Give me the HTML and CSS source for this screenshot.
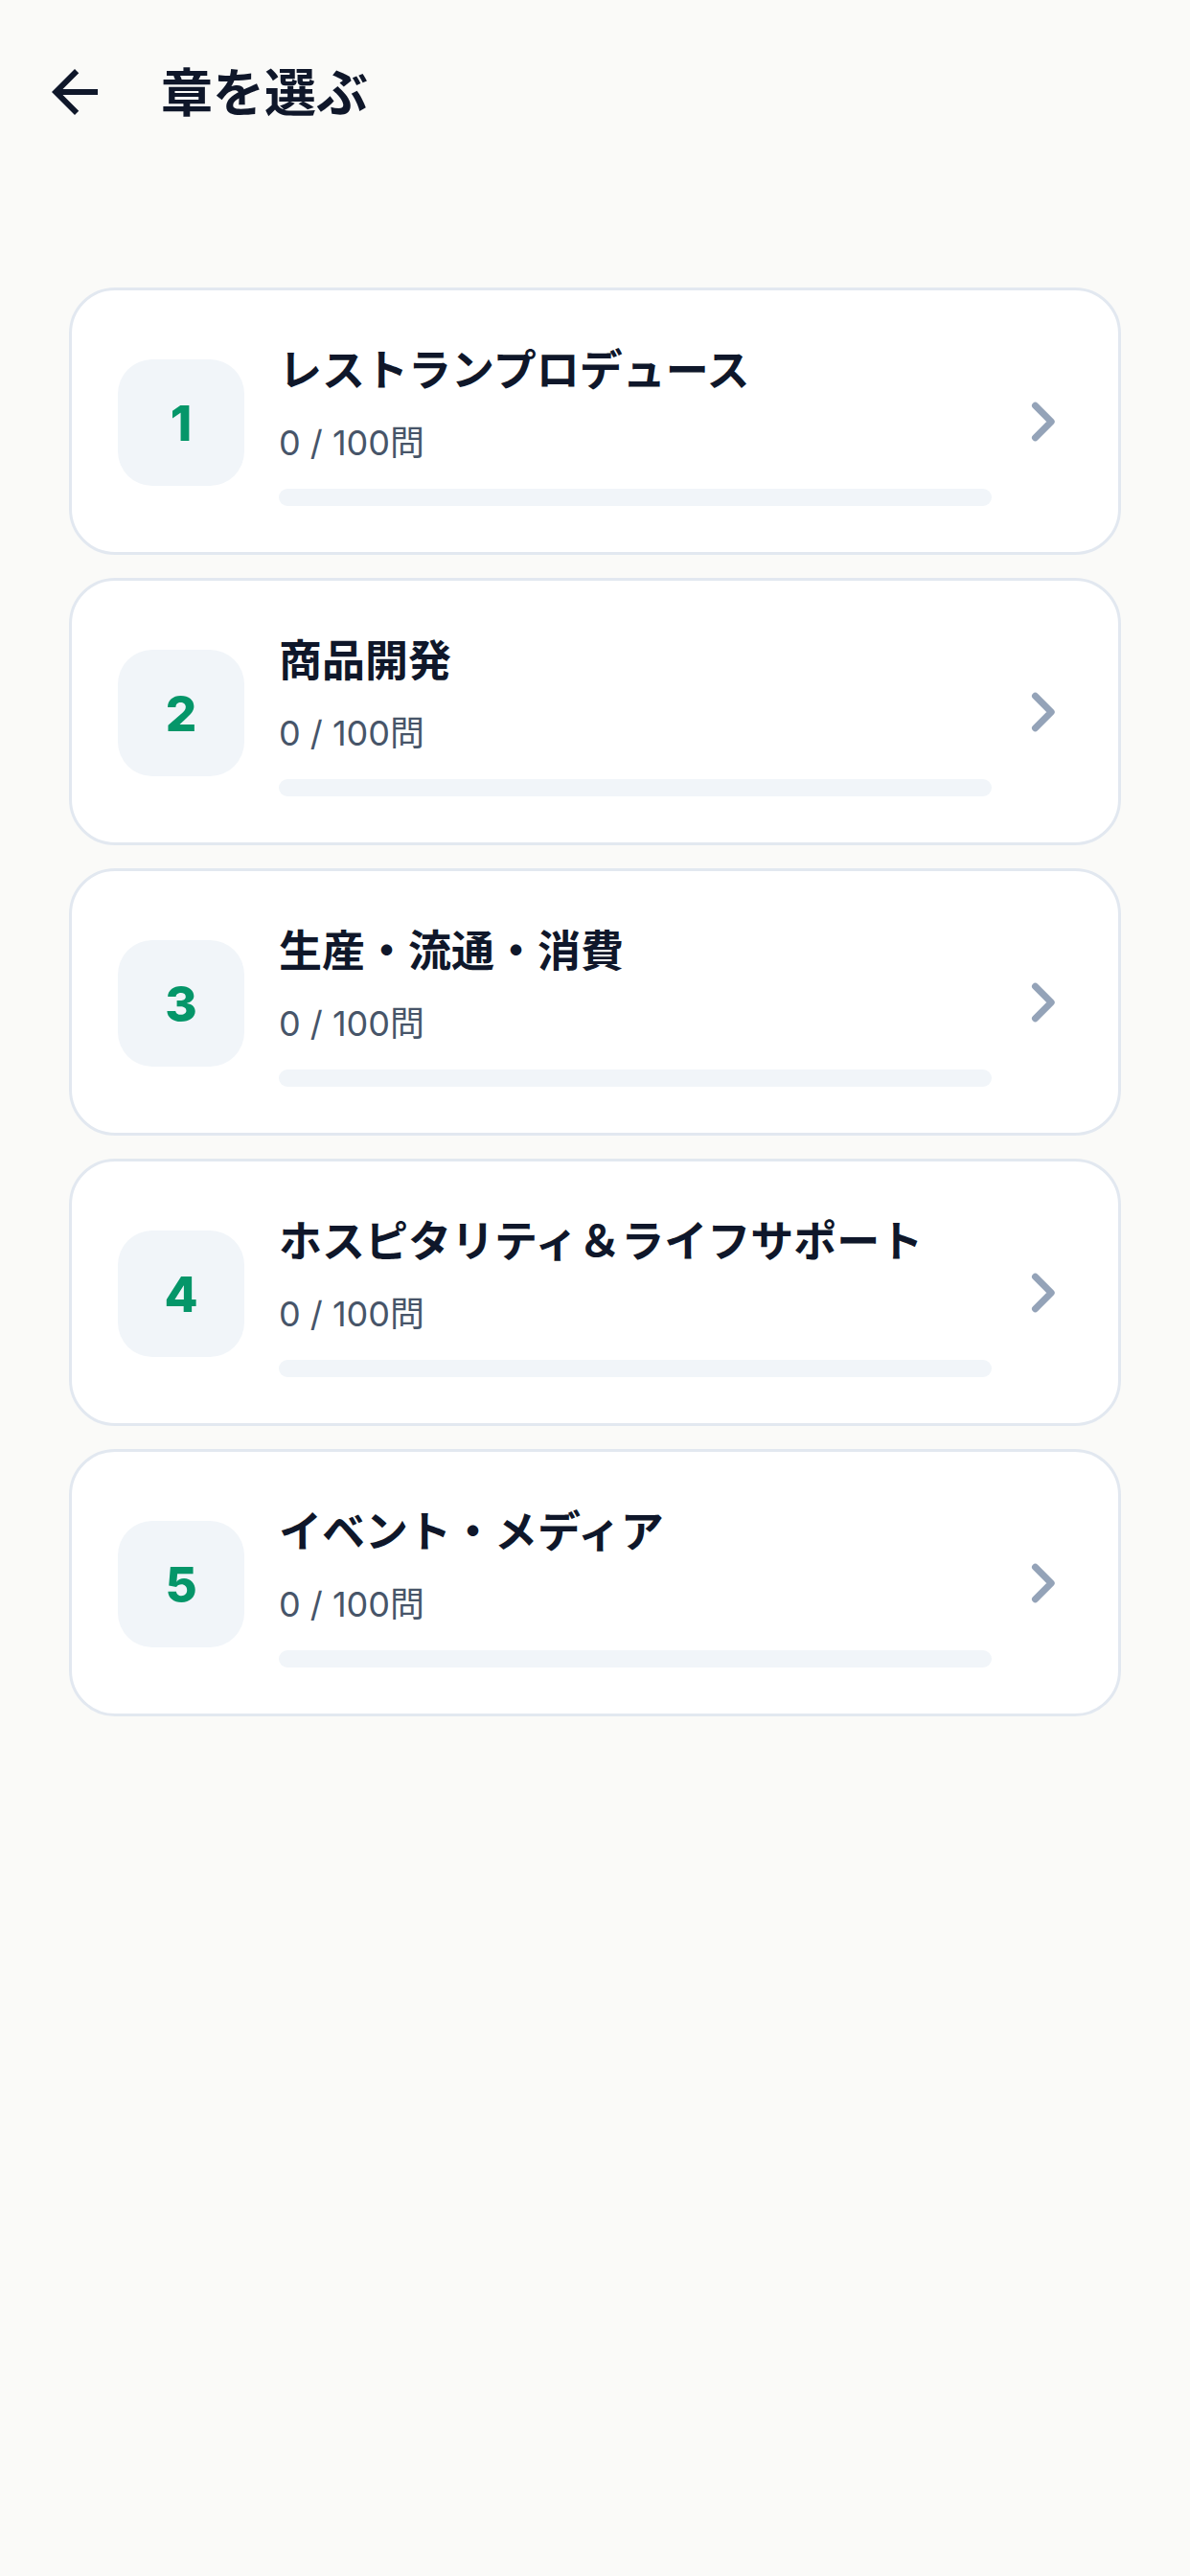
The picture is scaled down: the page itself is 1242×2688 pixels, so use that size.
FILE: index.html
```html
<!DOCTYPE html>
<html lang="ja">
<head>
<meta charset="utf-8">
<meta name="viewport" content="width=device-width, initial-scale=1">
<title>章を選ぶ</title>
<link rel="stylesheet" href="styles.css">
</head>
<body>
<header class="app-bar">
  <button class="back" type="button" aria-label="戻る">
    <svg viewBox="0 0 24 24" width="72" height="72" aria-hidden="true"><path fill="currentColor" d="M20 11H7.83l5.59-5.59L12 4l-8 8 8 8 1.41-1.41L7.83 13H20v-2z"/></svg>
  </button>
  <h1 class="title">章を選ぶ</h1>
</header>
<main class="chapters">
  <a class="card" href="#chapter-1">
    <span class="number">1</span>
    <span class="info"><span class="name">レストランプロデュース</span><span class="count">0 / 100問</span><span class="track"></span></span>
    <svg class="chevron" viewBox="0 0 66 66" aria-hidden="true"><path d="M27.5 16.2L44.2 33 27.5 49.8"/></svg>
  </a>
  <a class="card" href="#chapter-2">
    <span class="number">2</span>
    <span class="info"><span class="name">商品開発</span><span class="count">0 / 100問</span><span class="track"></span></span>
    <svg class="chevron" viewBox="0 0 66 66" aria-hidden="true"><path d="M27.5 16.2L44.2 33 27.5 49.8"/></svg>
  </a>
  <a class="card" href="#chapter-3">
    <span class="number">3</span>
    <span class="info"><span class="name">生産・流通・消費</span><span class="count">0 / 100問</span><span class="track"></span></span>
    <svg class="chevron" viewBox="0 0 66 66" aria-hidden="true"><path d="M27.5 16.2L44.2 33 27.5 49.8"/></svg>
  </a>
  <a class="card" href="#chapter-4">
    <span class="number">4</span>
    <span class="info"><span class="name">ホスピタリティ＆ライフサポート</span><span class="count">0 / 100問</span><span class="track"></span></span>
    <svg class="chevron" viewBox="0 0 66 66" aria-hidden="true"><path d="M27.5 16.2L44.2 33 27.5 49.8"/></svg>
  </a>
  <a class="card" href="#chapter-5">
    <span class="number">5</span>
    <span class="info"><span class="name">イベント・メディア</span><span class="count">0 / 100問</span><span class="track"></span></span>
    <svg class="chevron" viewBox="0 0 66 66" aria-hidden="true"><path d="M27.5 16.2L44.2 33 27.5 49.8"/></svg>
  </a>
</main>
</body>
</html>
```
FILE: styles.css
```css
* { box-sizing: border-box; }
body {
  margin: 0;
  min-height: 100vh;
  background: #fafaf8;
  color: #0f172a;
  font-family: Inter, "Noto Sans CJK JP", sans-serif;
}
.app-bar {
  display: flex;
  align-items: center;
  gap: 54px;
  height: 192px;
  padding: 0 42px;
}
.back {
  display: flex;
  padding: 0;
  border: 0;
  background: none;
  color: inherit;
  cursor: pointer;
}
.title {
  margin: 0;
  padding-top: 4px;
  font-size: 54px;
  line-height: 72px;
  font-weight: 700;
}
.chapters {
  display: flex;
  flex-direction: column;
  gap: 24px;
  padding: 108px 72px 72px;
}
.card {
  display: flex;
  align-items: center;
  padding: 48px;
  border: 3px solid #e2e8f0;
  border-radius: 48px;
  background: #fff;
  color: inherit;
  text-decoration: none;
}
.number {
  display: flex;
  flex: none;
  align-items: center;
  justify-content: center;
  width: 132px;
  height: 132px;
  margin-top: 3px;
  border-radius: 36px;
  background: #f1f5f9;
  color: #059669;
  font-size: 51px;
  font-weight: 800;
}
.info {
  display: flex;
  flex: 1;
  flex-direction: column;
  min-width: 0;
  margin: 0 18px 0 36px;
}
.name { font-size: 45px; line-height: 72px; font-weight: 700; }
.count {
  margin-top: 12px;
  color: #475569;
  font-size: 36px;
  line-height: 54px;
  font-weight: 400;
}
.track { height: 18px; margin-top: 21px; border-radius: 9px; background: #f1f5f9; }
.chevron {
  flex: none;
  width: 66px;
  height: 66px;
  fill: none;
  stroke: #94a3b8;
  stroke-width: 7;
  stroke-linecap: round;
  stroke-linejoin: round;
}
```
